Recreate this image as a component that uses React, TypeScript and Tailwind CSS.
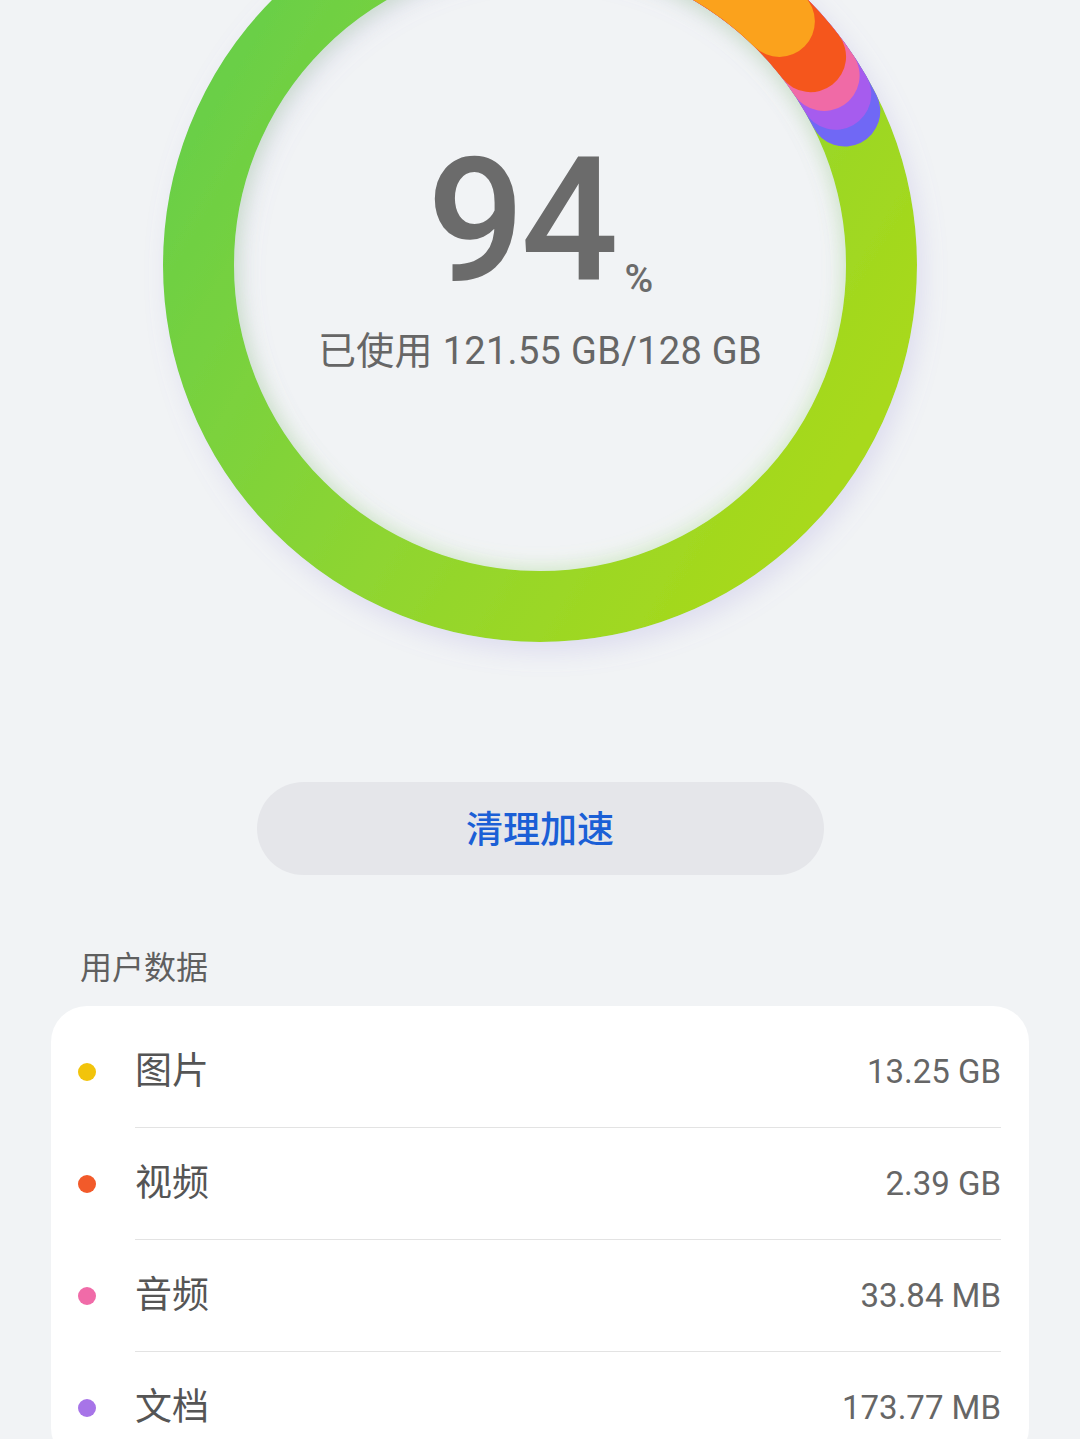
import React from 'react';

type Segment = { color: string; start: number; end: number };

const CX = 390;
const CY = 390;
const R = 341.5;

// angles in degrees, clockwise from 12 o'clock
const point = (deg: number) => {
    const rad = ((deg - 90) * Math.PI) / 180;
    return [CX + R * Math.cos(rad), CY + R * Math.sin(rad)];
};

const arcPath = (start: number, end: number) => {
    const [x0, y0] = point(start);
    const [x1, y1] = point(end);
    const large = end - start > 180 ? 1 : 0;
    return `M ${x0} ${y0} A ${R} ${R} 0 ${large} 1 ${x1} ${y1}`;
};

const segments: Segment[] = [
    { color: '#7068f5', start: 14, end: 63.2 },
    { color: '#a65cee', start: 14, end: 60 },
    { color: '#f06aa6', start: 14, end: 56.3 },
    { color: '#f5561f', start: 14, end: 52.4 },
    { color: '#fba21b', start: 14, end: 44.5 },
];

const userData = [
    { label: '图片', value: '13.25 GB', dot: 'bg-[#f2c40b]' },
    { label: '视频', value: '2.39 GB', dot: 'bg-[#f25a2a]' },
    { label: '音频', value: '33.84 MB', dot: 'bg-[#f06ba8]' },
    { label: '文档', value: '173.77 MB', dot: 'bg-[#a774e8]' },
];

const StorageRing: React.FC = () => (
    <svg width="780" height="780" viewBox="0 0 780 780" className="[grid-area:1/1] overflow-visible">
        <defs>
            <linearGradient id="ringGreen" x1="0" y1="0.1" x2="1" y2="0.7">
                <stop offset="0%" stopColor="#64ce4a" />
                <stop offset="55%" stopColor="#8ed531" />
                <stop offset="100%" stopColor="#a8d91a" />
            </linearGradient>
            <filter id="ringShadow" x="-20%" y="-20%" width="140%" height="140%">
                <feDropShadow dx="6" dy="10" stdDeviation="12" floodColor="#8f86d6" floodOpacity="0.2" />
            </filter>
            <filter id="innerGlow" x="-20%" y="-20%" width="140%" height="140%">
                <feGaussianBlur stdDeviation="9" />
            </filter>
        </defs>
        <circle cx={CX} cy={CY} r={R - 20} fill="none" stroke="#a8e67a" strokeOpacity="0.35" strokeWidth="40" filter="url(#innerGlow)" />
        <g filter="url(#ringShadow)">
            <circle cx={CX} cy={CY} r={R} fill="none" stroke="url(#ringGreen)" strokeWidth="71" />
            {segments.map((s) => (
                <path key={s.color} d={arcPath(s.start, s.end)} fill="none" stroke={s.color} strokeWidth="71" strokeLinecap="round" />
            ))}
        </g>
    </svg>
);

const App: React.FC = () => {
    return (
        <div className="min-h-screen bg-[#f1f3f5] font-[Roboto,'Noto_Sans_CJK_SC',sans-serif] overflow-hidden">
            <div className="grid w-[780px] h-[780px] mx-auto -mt-[125px]">
                <StorageRing />
                <div className="[grid-area:1/1] flex flex-col items-center pt-[260px]">
                    <div className="flex items-baseline text-[#6b6b6b]">
                        <span className="text-[172px] leading-none font-medium tracking-[-4px]">94</span>
                        <span className="text-[39px] leading-none font-medium ml-[10px] translate-y-[12px]">%</span>
                    </div>
                    <div className="mt-[21px] text-[38px] leading-[46px] tracking-[0.3px] text-[#666]">已使用 121.55 GB/128 GB</div>
                </div>
            </div>

            <div className="flex justify-center mt-[127px]">
                <button className="w-[567px] h-[93px] rounded-full bg-[#e5e6ea] text-[#1b5fd6] text-[37px] font-medium pt-[4px]">
                    清理加速
                </button>
            </div>

            <div className="mt-[73px] px-[80px] text-[32px] leading-[40px] text-[#5f5f5f]">用户数据</div>

            <div className="mt-[18px] mx-[51px] bg-white rounded-[36px] pt-[10px] pl-[27px] pr-[28px]">
                {userData.map((item, i) => (
                    <div key={item.label} className="flex items-center h-[112px]">
                        <span className={`w-[18px] h-[18px] rounded-full ${item.dot}`} />
                        <div
                            className={`flex-1 h-full ml-[39px] flex items-center justify-between ${
                                i < userData.length - 1 ? 'border-b border-[#e3e3e3]' : ''
                            }`}
                        >
                            <span className="text-[37px] text-[#555]">{item.label}</span>
                            <span className="text-[33px] text-[#666]">{item.value}</span>
                        </div>
                    </div>
                ))}
            </div>
        </div>
    );
};

export default App;
